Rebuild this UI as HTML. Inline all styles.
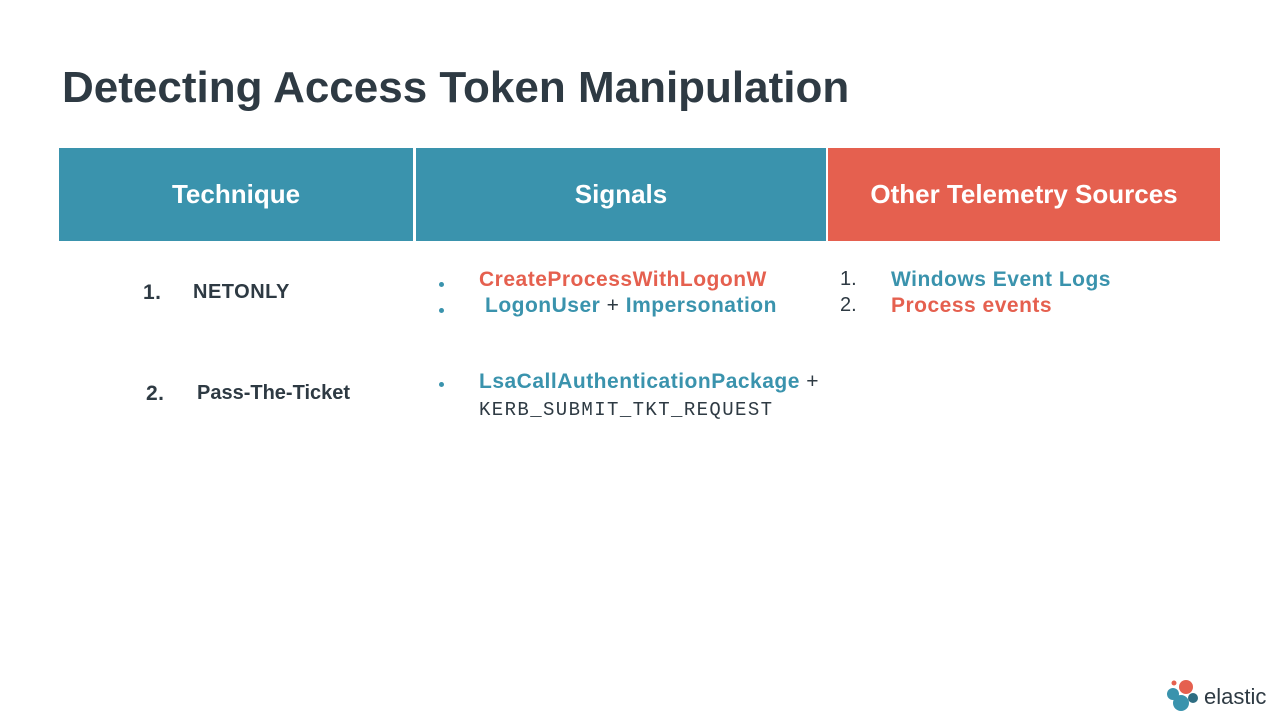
<!DOCTYPE html>
<html><head><meta charset="utf-8"><style>
body{margin:0;width:1280px;height:720px;background:#fff;position:relative;overflow:hidden;font-family:"Liberation Sans",sans-serif;font-weight:bold}
.a{position:absolute;white-space:nowrap}
.t{color:#3a93ad}.r{color:#e5604f}.d{color:#2e3a43}
.h{position:absolute;top:148px;height:93px;background:#3a93ad;color:#fff;font-size:26px;display:flex;align-items:center;justify-content:center}
.b{position:absolute;width:5px;height:5px;border-radius:50%;background:#3a93ad}
.s{font-size:21px;letter-spacing:0.5px}
</style></head><body>
<div class="a d" style="left:62px;top:63px;font-size:44px">Detecting Access Token Manipulation</div>
<div class="h" style="left:59px;width:354px">Technique</div>
<div class="h" style="left:416px;width:410px">Signals</div>
<div class="h" style="left:828px;width:392px;background:#e5604f">Other Telemetry Sources</div>
<div class="a d s" style="left:143px;top:281px">1.</div>
<div class="a d s" style="left:193px;top:281px;font-size:20px">NETONLY</div>
<div class="a d s" style="left:146px;top:382px">2.</div>
<div class="a d s" style="left:197px;top:382px;font-size:20px;letter-spacing:0">Pass-The-Ticket</div>
<div class="b" style="left:439px;top:282px"></div>
<div class="b" style="left:439px;top:308px"></div>
<div class="b" style="left:439px;top:382px"></div>
<div class="a r s" style="left:479px;top:268px">CreateProcessWithLogonW</div>
<div class="a t s" style="left:485px;top:294px">LogonUser <span class="d" style="font-weight:normal">+</span> Impersonation</div>
<div class="a t s" style="left:479px;top:370px">LsaCallAuthenticationPackage <span class="d" style="font-weight:normal">+</span></div>
<div class="a d" style="left:479px;top:399px;font-size:19px;letter-spacing:1.4px;font-family:'Liberation Mono',monospace;font-weight:normal">KERB_SUBMIT_TKT_REQUEST</div>
<div class="a d" style="left:840px;top:268px;font-size:20px;font-weight:normal">1.</div>
<div class="a d" style="left:840px;top:294px;font-size:20px;font-weight:normal">2.</div>
<div class="a t s" style="left:891px;top:268px">Windows Event Logs</div>
<div class="a r s" style="left:891px;top:294px">Process events</div>
<svg class="a" style="left:1166px;top:677px" width="36" height="36" viewBox="0 0 36 36">
<circle cx="20" cy="10" r="7" fill="#e5604f"/><circle cx="8" cy="6" r="2.5" fill="#e5604f"/>
<circle cx="7" cy="17" r="6" fill="#3a93ad"/><circle cx="15" cy="26" r="8" fill="#3a93ad"/><circle cx="27" cy="21" r="5" fill="#2e6d82"/>
</svg>
<div class="a d" style="left:1204px;top:684px;font-size:22px;font-weight:normal">elastic</div>
</body></html>
